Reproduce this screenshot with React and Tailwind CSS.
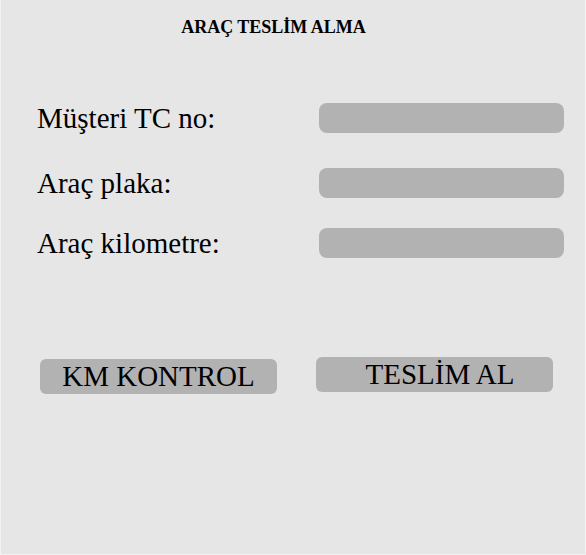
import React from 'react'

const Field = ({ label, className = '' }) => (
  <div className={`flex items-center ${className}`}>
    <label className="w-[282px] font-['Liberation_Serif','Times_New_Roman',serif] text-[29px] leading-none text-black">
      {label}
    </label>
    <div className="w-[245px] h-[30px] rounded-lg bg-[#b2b2b2]" />
  </div>
)

const App = () => {
  return (
    <div className="w-[586px] h-[555px] bg-[#e6e6e6] border-l border-r border-b border-[#f2f2f2] flex flex-col pl-[36px] font-['Liberation_Serif','Times_New_Roman',serif]">
      {/* TITLE */}
      <h1 className="w-[473px] pt-[18px] text-center font-['Liberation_Serif','Times_New_Roman',serif] text-[18px] font-bold leading-none text-black">
        ARAÇ TESLİM ALMA
      </h1>

      {/* FORM */}
      <Field label="Müşteri TC no:" className="mt-[67px]" />
      <Field label="Araç plaka:" className="mt-[35px]" />
      <Field label="Araç kilometre:" className="mt-[30px]" />

      {/* BUTTONS */}
      <div className="flex items-start mt-[99px] pl-[3px] gap-[39px]">
        <button className="mt-[2px] w-[237px] h-[35px] rounded-md bg-[#b2b2b2] flex items-center justify-center font-['Liberation_Serif','Times_New_Roman',serif] text-[29px] leading-none text-black">
          KM KONTROL
        </button>
        <button className="w-[237px] h-[35px] rounded-md bg-[#b2b2b2] flex items-center justify-center pl-[11px] font-['Liberation_Serif','Times_New_Roman',serif] text-[29px] leading-none text-black">
          TESLİM AL
        </button>
      </div>
    </div>
  )
}

export default App
